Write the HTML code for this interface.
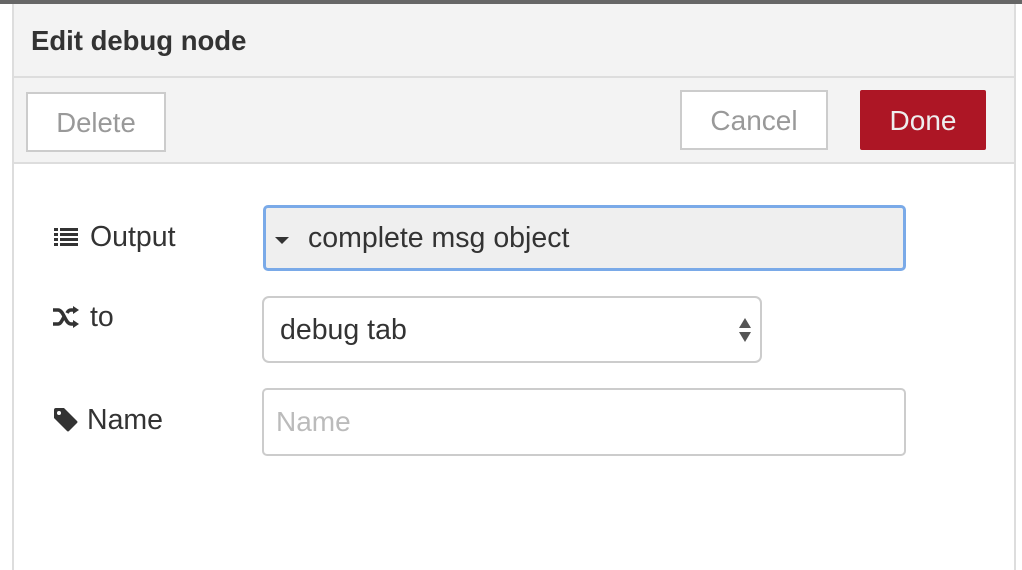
<!DOCTYPE html>
<html><head><style>
*{box-sizing:border-box;margin:0;padding:0}
body{width:1022px;height:570px;overflow:hidden;background:#fff;font-family:"Liberation Sans",sans-serif;position:relative}
.abs{position:absolute}
</style></head><body>
<div class="abs" style="left:0;top:0;width:1022px;height:4px;background:#666"></div>
<div class="abs" style="left:0;top:4px;width:13px;height:566px;background:#fff"></div>
<div class="abs" style="left:12px;top:4px;width:2px;height:566px;background:#ddd"></div>
<div class="abs" style="left:1014px;top:4px;width:2px;height:566px;background:#ddd"></div>
<div class="abs" style="left:1016px;top:4px;width:6px;height:566px;background:#fff"></div>
<div class="abs" style="left:14px;top:4px;width:1000px;height:72px;background:#f3f3f3"></div>
<div class="abs" style="left:31px;top:25px;font-size:27.5px;font-weight:bold;color:#333">Edit debug node</div>
<div class="abs" style="left:14px;top:76px;width:1000px;height:2px;background:#ddd"></div>
<div class="abs" style="left:14px;top:78px;width:1000px;height:84px;background:#f3f3f3"></div>
<div class="abs" style="left:14px;top:162px;width:1000px;height:2px;background:#ddd"></div>
<div class="abs" style="left:26px;top:92px;width:140px;height:60px;background:#fff;border:2px solid #ccc;color:#999;font-size:27.5px;text-align:center;line-height:58px">Delete</div>
<div class="abs" style="left:680px;top:90px;width:148px;height:60px;background:#fff;border:2px solid #ccc;color:#999;font-size:28px;text-align:center;line-height:58px">Cancel</div>
<div class="abs" style="left:860px;top:90px;width:126px;height:60px;background:#ad1625;border-radius:2px;color:#eee;font-size:28px;text-align:center;line-height:61px">Done</div>
<svg class="abs" style="left:54px;top:228px" width="24" height="18" viewBox="0 0 24 18"><g fill="#333"><rect x="0" y="0" width="4" height="3"/><rect x="6" y="0" width="18" height="3"/><rect x="0" y="5" width="4" height="3"/><rect x="6" y="5" width="18" height="3"/><rect x="0" y="10" width="4" height="3"/><rect x="6" y="10" width="18" height="3"/><rect x="0" y="15" width="4" height="3"/><rect x="6" y="15" width="18" height="3"/></g></svg>
<div class="abs" style="left:90px;top:221px;font-size:28.5px;color:#333">Output</div>
<svg class="abs" style="left:53px;top:306px" width="26" height="22" viewBox="0 0 26 22"><g fill="none" stroke="#333" stroke-width="3.5"><path d="M0 4H5C11 4 12 18 18 18H21"/><path d="M0 18H5C8 18 9 14 11 11"/><path d="M14 7C15 5 16 4 18 4H21"/></g><path d="M20 0L26 4L20 8Z M20 14L26 18L20 22Z" fill="#333"/></svg>
<div class="abs" style="left:90px;top:301px;font-size:28.5px;color:#333">to</div>
<svg class="abs" style="left:54px;top:408px" width="24" height="24" viewBox="0 0 24 24"><path d="M0 2Q0 0 2 0H10L23 13Q24 14 23 15L15 23Q14 24 13 23L0 10Z" fill="#333"/><circle cx="5" cy="5" r="2" fill="#fff"/></svg>
<div class="abs" style="left:87px;top:404px;font-size:28.5px;color:#333">Name</div>
<div class="abs" style="left:263px;top:205px;width:643px;height:66px;background:#efefef;border:3px solid #7aaae8;border-radius:5px"></div>
<svg class="abs" style="left:275px;top:237px" width="14" height="8"><path d="M0 0H14L7 7Z" fill="#333"/></svg>
<div class="abs" style="left:308px;top:222px;font-size:28.5px;color:#333">complete msg object</div>
<div class="abs" style="left:262px;top:296px;width:500px;height:67px;background:#fff;border:2px solid #ccc;border-radius:7px"></div>
<div class="abs" style="left:280px;top:314px;font-size:28.5px;color:#333">debug tab</div>
<svg class="abs" style="left:738px;top:317px" width="14" height="26"><path d="M1 11L7 1L13 11Z M1 15L7 25L13 15Z" fill="#555"/></svg>
<div class="abs" style="left:262px;top:388px;width:644px;height:68px;background:#fff;border:2px solid #ccc;border-radius:5px"></div>
<div class="abs" style="left:276px;top:406px;font-size:28px;color:#bbb">Name</div>
</body></html>
